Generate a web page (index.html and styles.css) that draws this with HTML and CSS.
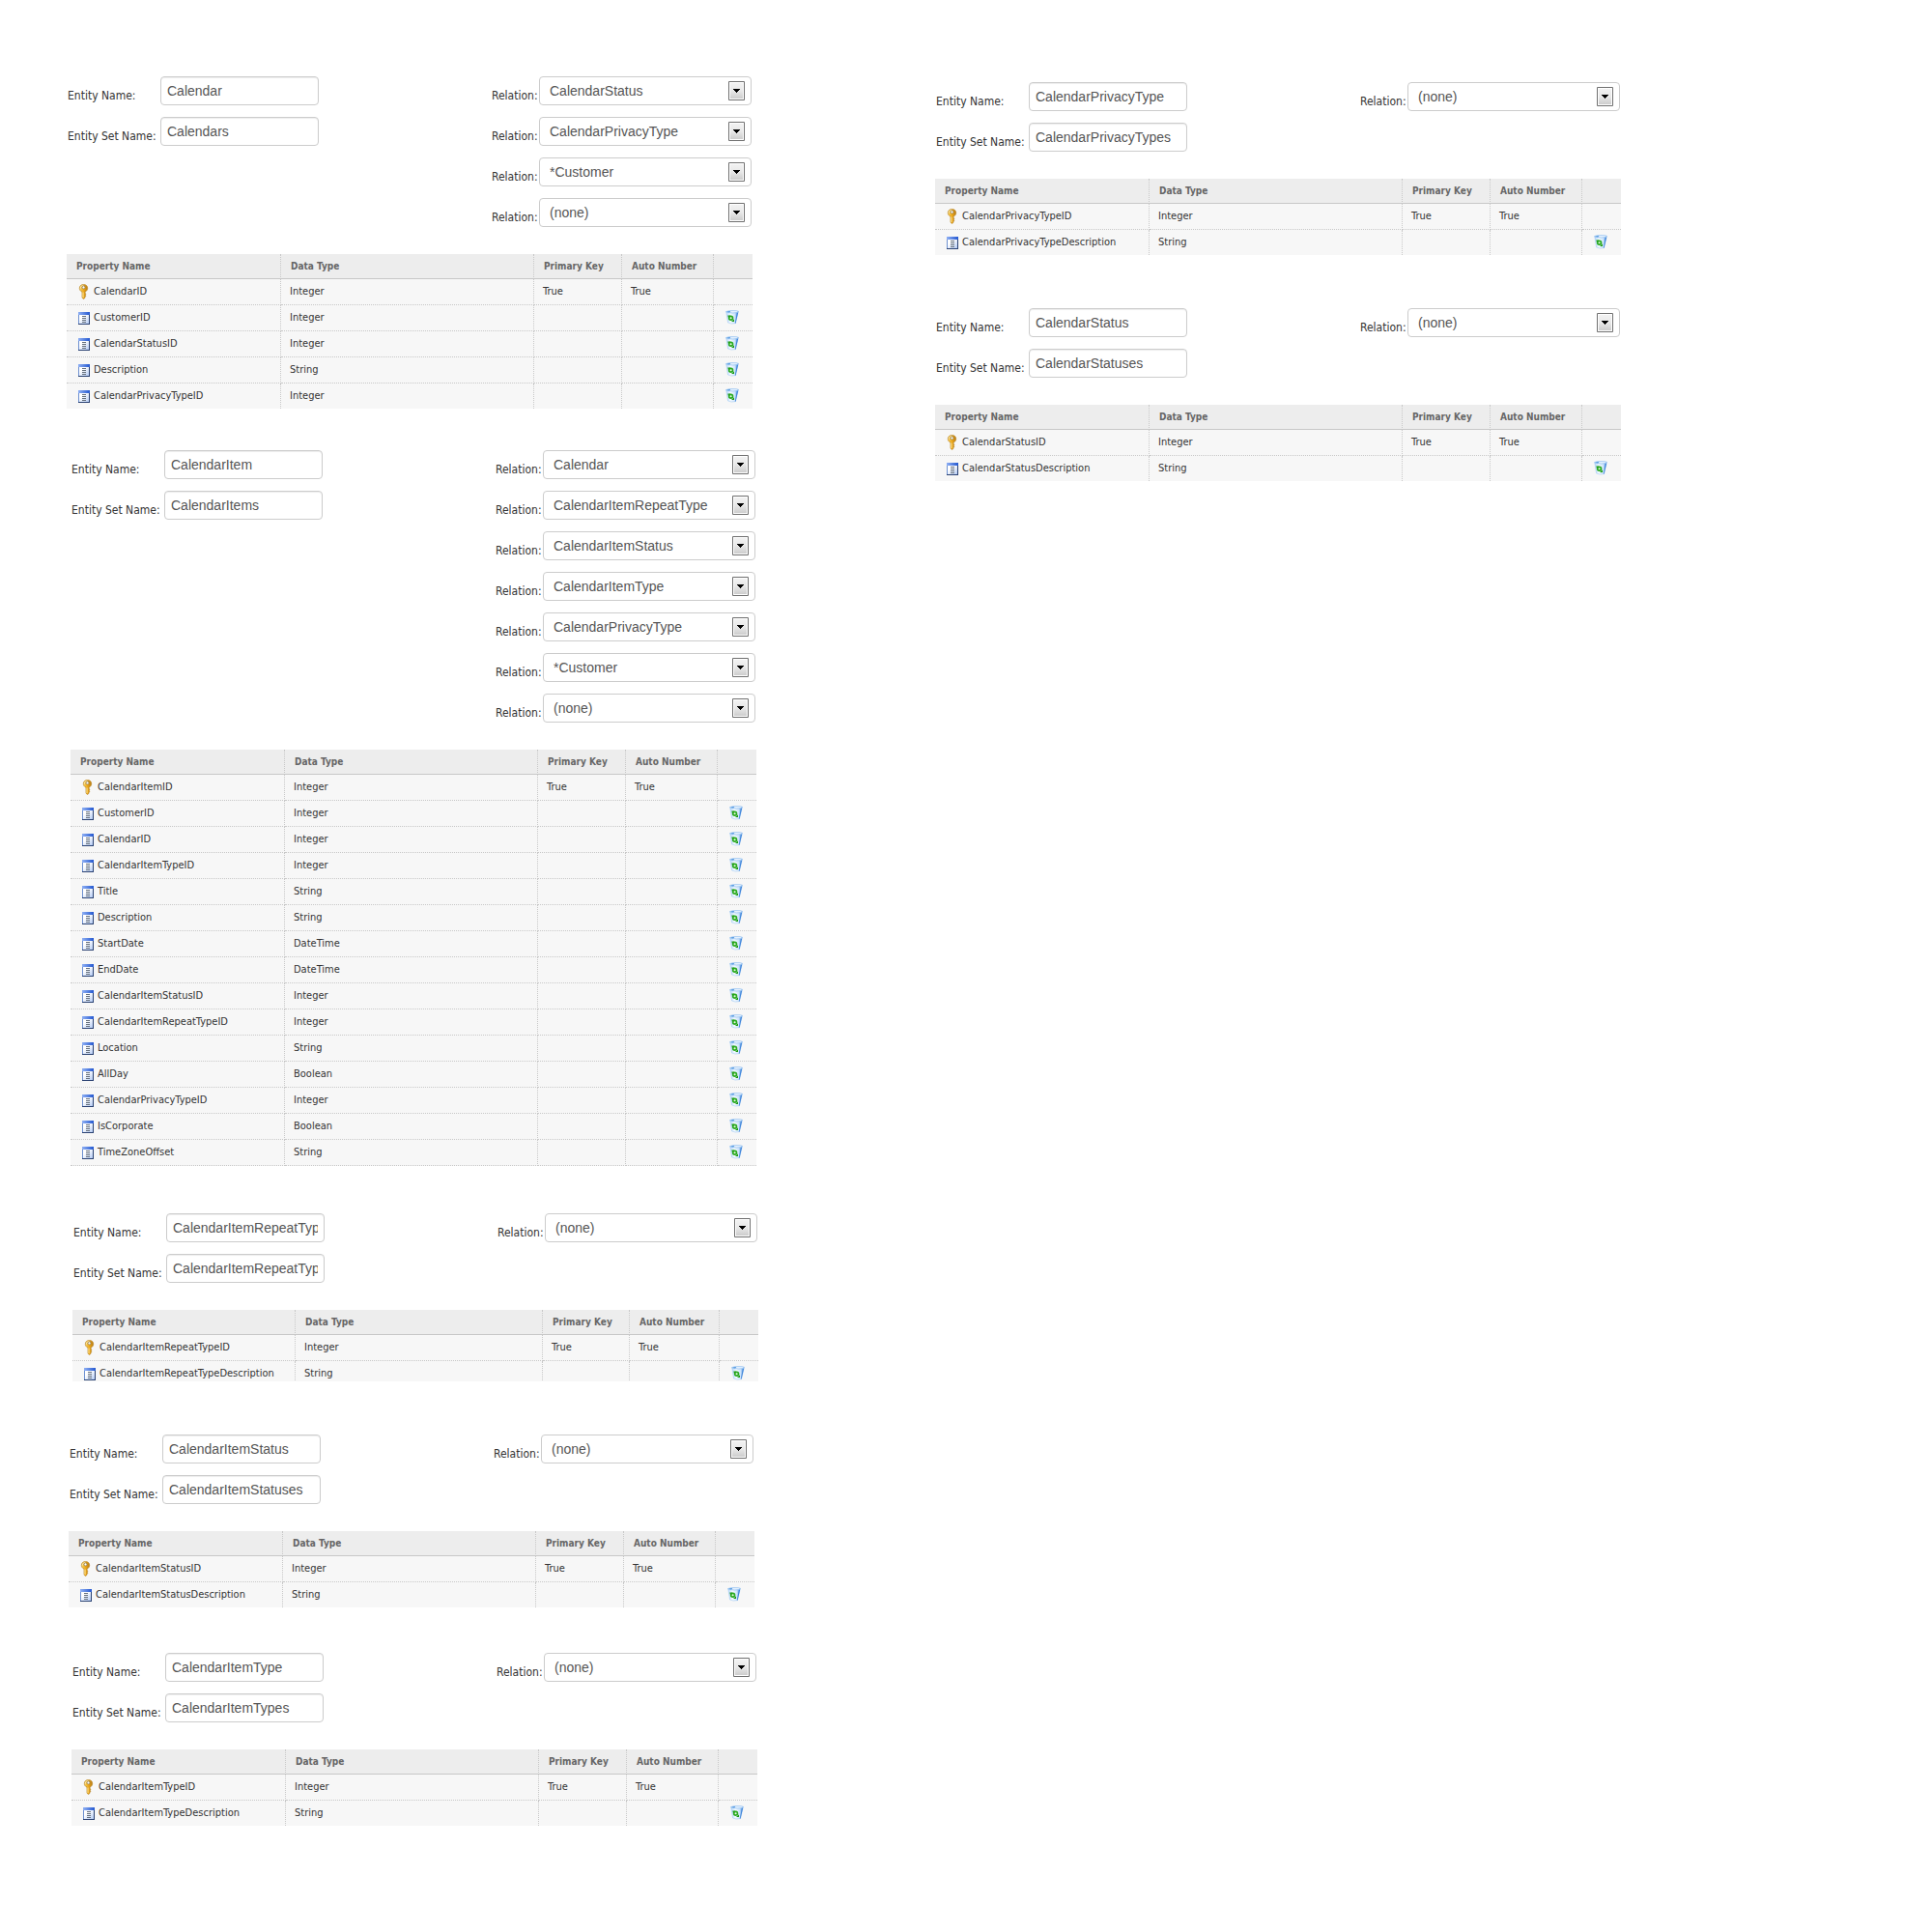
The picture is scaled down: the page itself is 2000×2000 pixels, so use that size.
FILE: index.html
```html
<!DOCTYPE html>
<html lang="en">
<head>
<meta charset="utf-8">
<title>Calendar entities</title>
<link rel="stylesheet" href="styles.css">
</head>
<body>
<svg class="sprite" aria-hidden="true">
  <defs>
    <linearGradient id="gold" x1="0" x2="1" y1="0" y2="0"><stop offset="0" stop-color="#f8d060"/><stop offset=".5" stop-color="#eca91c"/><stop offset="1" stop-color="#b8790f"/></linearGradient>
    <linearGradient id="bar" x1="0" x2="1" y1="0" y2="0"><stop offset="0" stop-color="#8fb0f4"/><stop offset="1" stop-color="#2458d0"/></linearGradient>
    <linearGradient id="sheet" x1="0" x2="1" y1="0" y2="1"><stop offset=".3" stop-color="#ffffff"/><stop offset="1" stop-color="#b4cbf4"/></linearGradient>
    <linearGradient id="bin" x1="0" x2="1" y1="0" y2="0"><stop offset="0" stop-color="#b4d6fa"/><stop offset=".35" stop-color="#f4faff"/><stop offset=".7" stop-color="#cfe5fb"/><stop offset="1" stop-color="#4a90e2"/></linearGradient>
    <linearGradient id="face" x1="0" x2="0" y1="0" y2="1"><stop offset="0" stop-color="#f2f2f2"/><stop offset=".5" stop-color="#e8e8e8"/><stop offset="1" stop-color="#cdcdcd"/></linearGradient>
  </defs>
  <symbol id="key" viewBox="0 0 12 16">
    <path d="M5.500.5C3 .5 1.300 2 1.300 4.300c0 1.800 1 3 2.700 3.900v6L5.500 15.500 7 14.300v-1.200l1-.8-.8-1 .8-1-1-.9V8.200c1.700-.9 2.700-2.100 2.700-3.900C9.700 2 8 .5 5.500.5z" fill="url(#gold)" stroke="#b8862c" stroke-width=".7"/>
    <path d="M5 8.500v5.500" stroke="#ffe69a" stroke-width="1"/>
    <path d="M2.300 4.500C2.500 2.500 4 1.300 5.500 1.300" fill="none" stroke="#fff0b8" stroke-width="1"/>
    <circle cx="5.500" cy="3.400" r="1.500" fill="#fff" stroke="#8a7a50" stroke-width=".8"/>
  </symbol>
  <symbol id="list" viewBox="0 0 12 13">
    <path d="M0 0h12v13H0z" fill="#6d90d0"/>
    <path d="M0 0h12v3H0z" fill="url(#bar)"/>
    <path d="M1 3h10v9H1z" fill="url(#sheet)"/>
    <path d="M11 3h1v10H0v-1h11z" fill="#2b4272"/>
    <path d="M4 4.500h4M4 6.500h4M4 8.500h4M4 10.500h4" stroke="#66707c" stroke-width="1"/>
  </symbol>
  <symbol id="trash" viewBox="0 0 14 15">
    <path d="M.8 2L2.600 13Q6 14.800 10.500 13.600L13.300 1.800z" fill="url(#bin)" stroke="#9cc6f2" stroke-width=".5"/>
    <path d="M10.600 13.400L13.100 2.400 11.800 3 9.800 13.700z" fill="#3d82d8"/>
    <path d="M.5 1.600Q4 .2 8 .6q4-.2 5.500.8Q12 3 7.500 3 3 3 .5 1.600z" fill="#eaf5ff" stroke="#7cb2ec" stroke-width=".6"/>
    <path d="M1.500 1.600l3-.5.8.8-2 .5z" fill="#4c93de"/>
    <circle cx="5.600" cy="8.200" r="1.900" fill="#e6f7e2" stroke="#2bab20" stroke-width="1.700"/>
    <path d="M2.300 5.400h3L3 8zM9 9.200v2.800H6z" fill="#1c9a14"/>
  </symbol>
  <symbol id="drop" viewBox="0 0 17 20">
    <path d="M.5.5h16v19H.5z" fill="#fff" stroke="#707070"/>
    <path d="M2 2h13v16H2z" fill="url(#face)"/>
    <path d="M5 8h7v1h-1v1h-1v1H9v1H8v-1H7v-1H6V9H5z" fill="#000"/>
  </symbol>
</svg>

<main class="board">
  <div class="column">
    <section class="entity">
      <form class="fields">
        <div class="names">
          <label for="n1">Entity Name:</label><input id="n1" type="text" value="Calendar">
          <label for="s1">Entity Set Name:</label><input id="s1" type="text" value="Calendars">
        </div>
        <div class="relations">
          <label for="r11">Relation:</label><span class="pick"><select id="r11"><option>CalendarStatus</option></select><svg><use href="#drop"/></svg></span>
          <label for="r12">Relation:</label><span class="pick"><select id="r12"><option>CalendarPrivacyType</option></select><svg><use href="#drop"/></svg></span>
          <label for="r13">Relation:</label><span class="pick"><select id="r13"><option>*Customer</option></select><svg><use href="#drop"/></svg></span>
          <label for="r14">Relation:</label><span class="pick"><select id="r14"><option>(none)</option></select><svg><use href="#drop"/></svg></span>
        </div>
      </form>
      <table class="props">
        <colgroup><col class="c-name"><col class="c-type"><col class="c-key"><col class="c-auto"><col class="c-act"></colgroup>
        <thead><tr><th>Property Name</th><th>Data Type</th><th>Primary Key</th><th>Auto Number</th><th></th></tr></thead>
        <tbody>
          <tr><td><svg class="key"><use href="#key"/></svg>CalendarID</td><td>Integer</td><td>True</td><td>True</td><td></td></tr>
          <tr><td><svg class="list"><use href="#list"/></svg>CustomerID</td><td>Integer</td><td></td><td></td><td><button type="button" aria-label="Delete"><svg><use href="#trash"/></svg></button></td></tr>
          <tr><td><svg class="list"><use href="#list"/></svg>CalendarStatusID</td><td>Integer</td><td></td><td></td><td><button type="button" aria-label="Delete"><svg><use href="#trash"/></svg></button></td></tr>
          <tr><td><svg class="list"><use href="#list"/></svg>Description</td><td>String</td><td></td><td></td><td><button type="button" aria-label="Delete"><svg><use href="#trash"/></svg></button></td></tr>
          <tr><td><svg class="list"><use href="#list"/></svg>CalendarPrivacyTypeID</td><td>Integer</td><td></td><td></td><td><button type="button" aria-label="Delete"><svg><use href="#trash"/></svg></button></td></tr>
        </tbody>
      </table>
    </section>

    <section class="entity item">
      <form class="fields">
        <div class="names">
          <label for="n2">Entity Name:</label><input id="n2" type="text" value="CalendarItem">
          <label for="s2">Entity Set Name:</label><input id="s2" type="text" value="CalendarItems">
        </div>
        <div class="relations">
          <label for="r21">Relation:</label><span class="pick"><select id="r21"><option>Calendar</option></select><svg><use href="#drop"/></svg></span>
          <label for="r22">Relation:</label><span class="pick"><select id="r22"><option>CalendarItemRepeatType</option></select><svg><use href="#drop"/></svg></span>
          <label for="r23">Relation:</label><span class="pick"><select id="r23"><option>CalendarItemStatus</option></select><svg><use href="#drop"/></svg></span>
          <label for="r24">Relation:</label><span class="pick"><select id="r24"><option>CalendarItemType</option></select><svg><use href="#drop"/></svg></span>
          <label for="r25">Relation:</label><span class="pick"><select id="r25"><option>CalendarPrivacyType</option></select><svg><use href="#drop"/></svg></span>
          <label for="r26">Relation:</label><span class="pick"><select id="r26"><option>*Customer</option></select><svg><use href="#drop"/></svg></span>
          <label for="r27">Relation:</label><span class="pick"><select id="r27"><option>(none)</option></select><svg><use href="#drop"/></svg></span>
        </div>
      </form>
      <table class="props ruled">
        <colgroup><col class="c-name"><col class="c-type"><col class="c-key"><col class="c-auto"><col class="c-act"></colgroup>
        <thead><tr><th>Property Name</th><th>Data Type</th><th>Primary Key</th><th>Auto Number</th><th></th></tr></thead>
        <tbody>
          <tr><td><svg class="key"><use href="#key"/></svg>CalendarItemID</td><td>Integer</td><td>True</td><td>True</td><td></td></tr>
          <tr><td><svg class="list"><use href="#list"/></svg>CustomerID</td><td>Integer</td><td></td><td></td><td><button type="button" aria-label="Delete"><svg><use href="#trash"/></svg></button></td></tr>
          <tr><td><svg class="list"><use href="#list"/></svg>CalendarID</td><td>Integer</td><td></td><td></td><td><button type="button" aria-label="Delete"><svg><use href="#trash"/></svg></button></td></tr>
          <tr><td><svg class="list"><use href="#list"/></svg>CalendarItemTypeID</td><td>Integer</td><td></td><td></td><td><button type="button" aria-label="Delete"><svg><use href="#trash"/></svg></button></td></tr>
          <tr><td><svg class="list"><use href="#list"/></svg>Title</td><td>String</td><td></td><td></td><td><button type="button" aria-label="Delete"><svg><use href="#trash"/></svg></button></td></tr>
          <tr><td><svg class="list"><use href="#list"/></svg>Description</td><td>String</td><td></td><td></td><td><button type="button" aria-label="Delete"><svg><use href="#trash"/></svg></button></td></tr>
          <tr><td><svg class="list"><use href="#list"/></svg>StartDate</td><td>DateTime</td><td></td><td></td><td><button type="button" aria-label="Delete"><svg><use href="#trash"/></svg></button></td></tr>
          <tr><td><svg class="list"><use href="#list"/></svg>EndDate</td><td>DateTime</td><td></td><td></td><td><button type="button" aria-label="Delete"><svg><use href="#trash"/></svg></button></td></tr>
          <tr><td><svg class="list"><use href="#list"/></svg>CalendarItemStatusID</td><td>Integer</td><td></td><td></td><td><button type="button" aria-label="Delete"><svg><use href="#trash"/></svg></button></td></tr>
          <tr><td><svg class="list"><use href="#list"/></svg>CalendarItemRepeatTypeID</td><td>Integer</td><td></td><td></td><td><button type="button" aria-label="Delete"><svg><use href="#trash"/></svg></button></td></tr>
          <tr><td><svg class="list"><use href="#list"/></svg>Location</td><td>String</td><td></td><td></td><td><button type="button" aria-label="Delete"><svg><use href="#trash"/></svg></button></td></tr>
          <tr><td><svg class="list"><use href="#list"/></svg>AllDay</td><td>Boolean</td><td></td><td></td><td><button type="button" aria-label="Delete"><svg><use href="#trash"/></svg></button></td></tr>
          <tr><td><svg class="list"><use href="#list"/></svg>CalendarPrivacyTypeID</td><td>Integer</td><td></td><td></td><td><button type="button" aria-label="Delete"><svg><use href="#trash"/></svg></button></td></tr>
          <tr><td><svg class="list"><use href="#list"/></svg>IsCorporate</td><td>Boolean</td><td></td><td></td><td><button type="button" aria-label="Delete"><svg><use href="#trash"/></svg></button></td></tr>
          <tr><td><svg class="list"><use href="#list"/></svg>TimeZoneOffset</td><td>String</td><td></td><td></td><td><button type="button" aria-label="Delete"><svg><use href="#trash"/></svg></button></td></tr>
        </tbody>
      </table>
    </section>

    <section class="entity repeat">
      <form class="fields">
        <div class="names">
          <label for="n3">Entity Name:</label><input id="n3" type="text" value="CalendarItemRepeatType">
          <label for="s3">Entity Set Name:</label><input id="s3" type="text" value="CalendarItemRepeatTypes">
        </div>
        <div class="relations">
          <label for="r31">Relation:</label><span class="pick"><select id="r31"><option>(none)</option></select><svg><use href="#drop"/></svg></span>
        </div>
      </form>
      <div class="clip">
      <table class="props wide-name">
        <colgroup><col class="c-name"><col class="c-type"><col class="c-key"><col class="c-auto"><col class="c-act"></colgroup>
        <thead><tr><th>Property Name</th><th>Data Type</th><th>Primary Key</th><th>Auto Number</th><th></th></tr></thead>
        <tbody>
          <tr><td><svg class="key"><use href="#key"/></svg>CalendarItemRepeatTypeID</td><td>Integer</td><td>True</td><td>True</td><td></td></tr>
          <tr><td><svg class="list"><use href="#list"/></svg>CalendarItemRepeatTypeDescription</td><td>String</td><td></td><td></td><td><button type="button" aria-label="Delete"><svg><use href="#trash"/></svg></button></td></tr>
        </tbody>
      </table>
      </div>
    </section>

    <section class="entity status">
      <form class="fields">
        <div class="names">
          <label for="n4">Entity Name:</label><input id="n4" type="text" value="CalendarItemStatus">
          <label for="s4">Entity Set Name:</label><input id="s4" type="text" value="CalendarItemStatuses">
        </div>
        <div class="relations">
          <label for="r41">Relation:</label><span class="pick"><select id="r41"><option>(none)</option></select><svg><use href="#drop"/></svg></span>
        </div>
      </form>
      <table class="props">
        <colgroup><col class="c-name"><col class="c-type"><col class="c-key"><col class="c-auto"><col class="c-act"></colgroup>
        <thead><tr><th>Property Name</th><th>Data Type</th><th>Primary Key</th><th>Auto Number</th><th></th></tr></thead>
        <tbody>
          <tr><td><svg class="key"><use href="#key"/></svg>CalendarItemStatusID</td><td>Integer</td><td>True</td><td>True</td><td></td></tr>
          <tr><td><svg class="list"><use href="#list"/></svg>CalendarItemStatusDescription</td><td>String</td><td></td><td></td><td><button type="button" aria-label="Delete"><svg><use href="#trash"/></svg></button></td></tr>
        </tbody>
      </table>
    </section>

    <section class="entity type">
      <form class="fields">
        <div class="names">
          <label for="n5">Entity Name:</label><input id="n5" type="text" value="CalendarItemType">
          <label for="s5">Entity Set Name:</label><input id="s5" type="text" value="CalendarItemTypes">
        </div>
        <div class="relations">
          <label for="r51">Relation:</label><span class="pick"><select id="r51"><option>(none)</option></select><svg><use href="#drop"/></svg></span>
        </div>
      </form>
      <table class="props">
        <colgroup><col class="c-name"><col class="c-type"><col class="c-key"><col class="c-auto"><col class="c-act"></colgroup>
        <thead><tr><th>Property Name</th><th>Data Type</th><th>Primary Key</th><th>Auto Number</th><th></th></tr></thead>
        <tbody>
          <tr><td><svg class="key"><use href="#key"/></svg>CalendarItemTypeID</td><td>Integer</td><td>True</td><td>True</td><td></td></tr>
          <tr><td><svg class="list"><use href="#list"/></svg>CalendarItemTypeDescription</td><td>String</td><td></td><td></td><td><button type="button" aria-label="Delete"><svg><use href="#trash"/></svg></button></td></tr>
        </tbody>
      </table>
    </section>
  </div>

  <div class="column second">
    <section class="entity">
      <form class="fields">
        <div class="names">
          <label for="n6">Entity Name:</label><input id="n6" type="text" value="CalendarPrivacyType">
          <label for="s6">Entity Set Name:</label><input id="s6" type="text" value="CalendarPrivacyTypes">
        </div>
        <div class="relations">
          <label for="r61">Relation:</label><span class="pick"><select id="r61"><option>(none)</option></select><svg><use href="#drop"/></svg></span>
        </div>
      </form>
      <table class="props">
        <colgroup><col class="c-name"><col class="c-type"><col class="c-key"><col class="c-auto"><col class="c-act"></colgroup>
        <thead><tr><th>Property Name</th><th>Data Type</th><th>Primary Key</th><th>Auto Number</th><th></th></tr></thead>
        <tbody>
          <tr><td><svg class="key"><use href="#key"/></svg>CalendarPrivacyTypeID</td><td>Integer</td><td>True</td><td>True</td><td></td></tr>
          <tr><td><svg class="list"><use href="#list"/></svg>CalendarPrivacyTypeDescription</td><td>String</td><td></td><td></td><td><button type="button" aria-label="Delete"><svg><use href="#trash"/></svg></button></td></tr>
        </tbody>
      </table>
    </section>

    <section class="entity">
      <form class="fields">
        <div class="names">
          <label for="n7">Entity Name:</label><input id="n7" type="text" value="CalendarStatus">
          <label for="s7">Entity Set Name:</label><input id="s7" type="text" value="CalendarStatuses">
        </div>
        <div class="relations">
          <label for="r71">Relation:</label><span class="pick"><select id="r71"><option>(none)</option></select><svg><use href="#drop"/></svg></span>
        </div>
      </form>
      <table class="props">
        <colgroup><col class="c-name"><col class="c-type"><col class="c-key"><col class="c-auto"><col class="c-act"></colgroup>
        <thead><tr><th>Property Name</th><th>Data Type</th><th>Primary Key</th><th>Auto Number</th><th></th></tr></thead>
        <tbody>
          <tr><td><svg class="key"><use href="#key"/></svg>CalendarStatusID</td><td>Integer</td><td>True</td><td>True</td><td></td></tr>
          <tr><td><svg class="list"><use href="#list"/></svg>CalendarStatusDescription</td><td>String</td><td></td><td></td><td><button type="button" aria-label="Delete"><svg><use href="#trash"/></svg></button></td></tr>
        </tbody>
      </table>
    </section>
  </div>
</main>
</body>
</html>
```
FILE: styles.css
```css
* { box-sizing: border-box; }

body {
  margin: 0;
  background: #fff;
  color: #333;
  font-family: Tahoma, "DejaVu Sans Condensed", "Noto Sans", sans-serif;
  font-size: 11px;
}

.sprite { position: absolute; width: 0; height: 0; }

.board {
  display: grid;
  grid-template-columns: repeat(2, minmax(0, 716px));
  column-gap: 183px;
  padding: 79px 69px;
}

.column { display: flex; flex-direction: column; }
.column.second { padding-top: 6px; gap: 55px; }

.entity { width: 100%; max-width: 710px; }
.entity.item { margin: 43px 0 0 4px; }
.entity.repeat { margin: 49px 0 0 6px; }
.entity.status { margin: 55px 0 0 2px; }
.entity.type { margin: 47px 0 0 5px; }

.fields {
  display: flex;
  justify-content: space-between;
  align-items: flex-start;
  padding: 0 1px;
  margin: 0 0 28px;
}

.names, .relations { display: grid; row-gap: 12px; }
.names { grid-template-columns: 96px 164px; }
.relations { grid-template-columns: 49px 220px; }

label {
  padding-top: 12px;
  font-size: 12px;
  line-height: 16px;
  white-space: nowrap;
}

input, select {
  width: 100%;
  height: 30px;
  border: 1px solid #ccc;
  border-radius: 4px;
  background: #fff;
  color: #555;
  font-family: "Liberation Sans", Arial, sans-serif;
  font-size: 14px;
  line-height: 20px;
}

input { padding: 4px 6px; box-shadow: inset 0 1px 1px rgba(0, 0, 0, .075); }

.pick { position: relative; display: block; height: 30px; }
.pick select { appearance: none; padding: 4px 28px 4px 10px; }
.pick svg {
  position: absolute;
  top: 5px;
  right: 7px;
  width: 17px;
  height: 20px;
  pointer-events: none;
}

.props {
  width: 100%;
  table-layout: fixed;
  border-collapse: separate;
  border-spacing: 0;
  background: #f7f7f7;
}

.c-name { width: 222px; }
.c-key { width: 91px; }
.c-auto { width: 95px; }
.c-act { width: 40px; }
.wide-name .c-name { width: 231px; }
.wide-name .c-key { width: 90px; }
.wide-name .c-auto { width: 93px; }

th, td {
  padding: 0 0 0 10px;
  border-right: 1px dotted #c8c8c8;
  text-align: left;
  vertical-align: middle;
  white-space: nowrap;
}
th:last-child, td:last-child { border-right: 0; }

th {
  height: 26px;
  border-bottom: 1px solid #c8c8c8;
  background: #ededed;
  color: #666;
  font-size: 10px;
  font-weight: bold;
}

td { height: 27px; border-bottom: 1px dotted #c8c8c8; line-height: 16px; }
td + td { padding-left: 9px; }
td:last-child { padding: 0 0 2px 12px; }
.props:not(.ruled) tbody tr:last-child td { height: 26px; border-bottom: 0; }

td svg { display: inline-block; vertical-align: middle; }
.key { width: 12px; height: 16px; margin: 0 4px 0 2px; }
.list { width: 12px; height: 13px; margin: 0 4px 0 2px; }

button { display: block; margin: 0; padding: 0; border: 0; background: none; cursor: pointer; }
button svg { display: block; width: 14px; height: 15px; }

.clip { height: 74px; overflow: hidden; }
```
